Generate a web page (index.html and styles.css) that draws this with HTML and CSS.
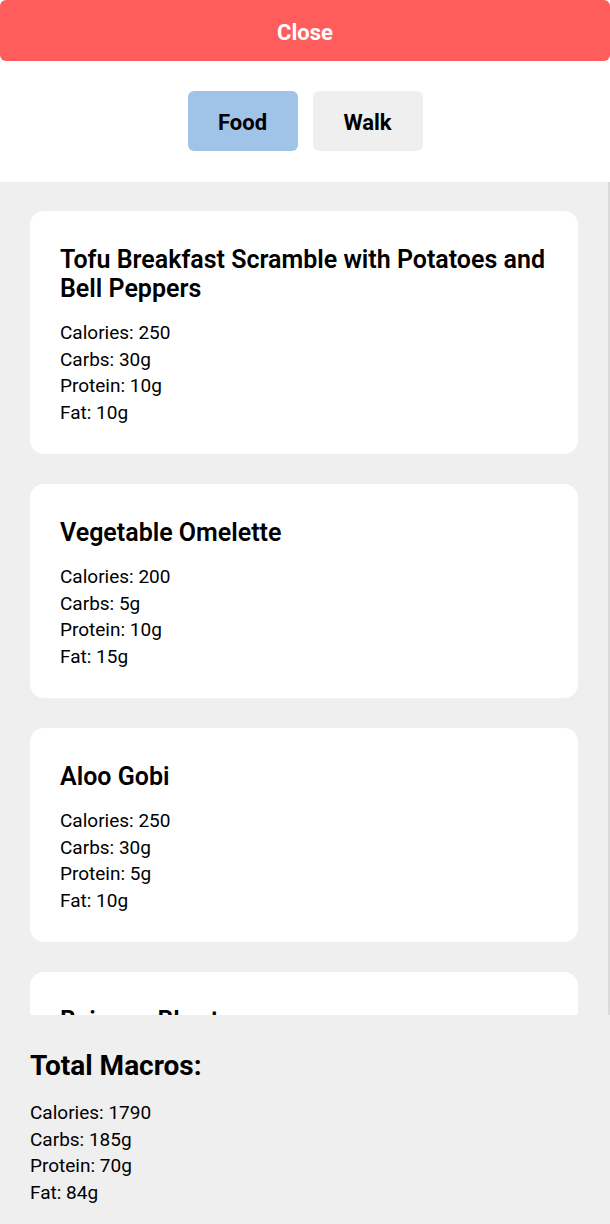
FILE: index.html
```html
<!DOCTYPE html>
<html lang="en">
<head>
<meta charset="utf-8">
<title>Macros</title>
<link rel="stylesheet" href="styles.css">
</head>
<body>
<div class="app">
  <header class="top">
    <button class="close-btn">Close</button>
    <nav class="tabs">
      <button class="tab tab-active">Food</button>
      <button class="tab">Walk</button>
    </nav>
  </header>
  <main class="list">
    <section class="card">
      <h2 class="card-title">Tofu Breakfast Scramble with Potatoes and Bell Peppers</h2>
      <ul class="macros">
        <li>Calories: 250</li>
        <li>Carbs: 30g</li>
        <li>Protein: 10g</li>
        <li>Fat: 10g</li>
      </ul>
    </section>
    <section class="card">
      <h2 class="card-title">Vegetable Omelette</h2>
      <ul class="macros">
        <li>Calories: 200</li>
        <li>Carbs: 5g</li>
        <li>Protein: 10g</li>
        <li>Fat: 15g</li>
      </ul>
    </section>
    <section class="card">
      <h2 class="card-title">Aloo Gobi</h2>
      <ul class="macros">
        <li>Calories: 250</li>
        <li>Carbs: 30g</li>
        <li>Protein: 5g</li>
        <li>Fat: 10g</li>
      </ul>
    </section>
    <section class="card card-partial">
      <h2 class="card-title">Baingan Bharta</h2>
    </section>
  </main>
  <footer class="totals">
    <h2 class="totals-title">Total Macros:</h2>
    <ul class="macros">
      <li>Calories: 1790</li>
      <li>Carbs: 185g</li>
      <li>Protein: 70g</li>
      <li>Fat: 84g</li>
    </ul>
  </footer>
</div>
</body>
</html>
```

FILE: styles.css
```css
* {
  box-sizing: border-box;
}

html, body {
  margin: 0;
  padding: 0;
}

body {
  font-family: Roboto, "Liberation Sans", sans-serif;
  color: #000;
  background: #efefef;
}

.app {
  height: 1224px;
  display: flex;
  flex-direction: column;
  overflow: hidden;
}

.top {
  background: #fff;
  display: flex;
  flex-direction: column;
  flex: none;
}

.close-btn {
  height: 61px;
  width: 100%;
  border: none;
  border-radius: 6px;
  background: #ff5c5c;
  color: #fff;
  font-family: inherit;
  font-size: 22px;
  font-weight: 700;
  padding: 3px 0 0;
}

.tabs {
  display: flex;
  justify-content: center;
  gap: 15px;
  padding: 30px 0 31px;
}

.tab {
  width: 110px;
  height: 60px;
  border: none;
  border-radius: 6px;
  background: #efefef;
  font-family: inherit;
  font-size: 22px;
  font-weight: 700;
  color: #000;
  padding: 2px 0 0;
}

.tab-active {
  background: #a0c4e8;
}

.list {
  height: 833px;
  flex: none;
  overflow: hidden;
  padding: 29px 30px 30px;
  display: flex;
  flex-direction: column;
  gap: 30px;
  border-right: 2px solid #dadada;
}

.card {
  background: #fff;
  border-radius: 14px;
  padding: 34px 30px 28px;
  flex: none;
}

.card-partial {
  min-height: 120px;
}

.card-title {
  margin: 0 0 17px;
  font-size: 25px;
  line-height: 29px;
  font-weight: 600;
}

.macros {
  list-style: none;
  margin: 0;
  padding: 0;
  font-size: 19px;
  line-height: 26.5px;
}

.totals {
  flex: 1;
  padding: 34px 30px 20px;
  background: #efefef;
}

.totals-title {
  margin: 0 0 18px;
  font-size: 28px;
  line-height: 33px;
  font-weight: 700;
}
```
